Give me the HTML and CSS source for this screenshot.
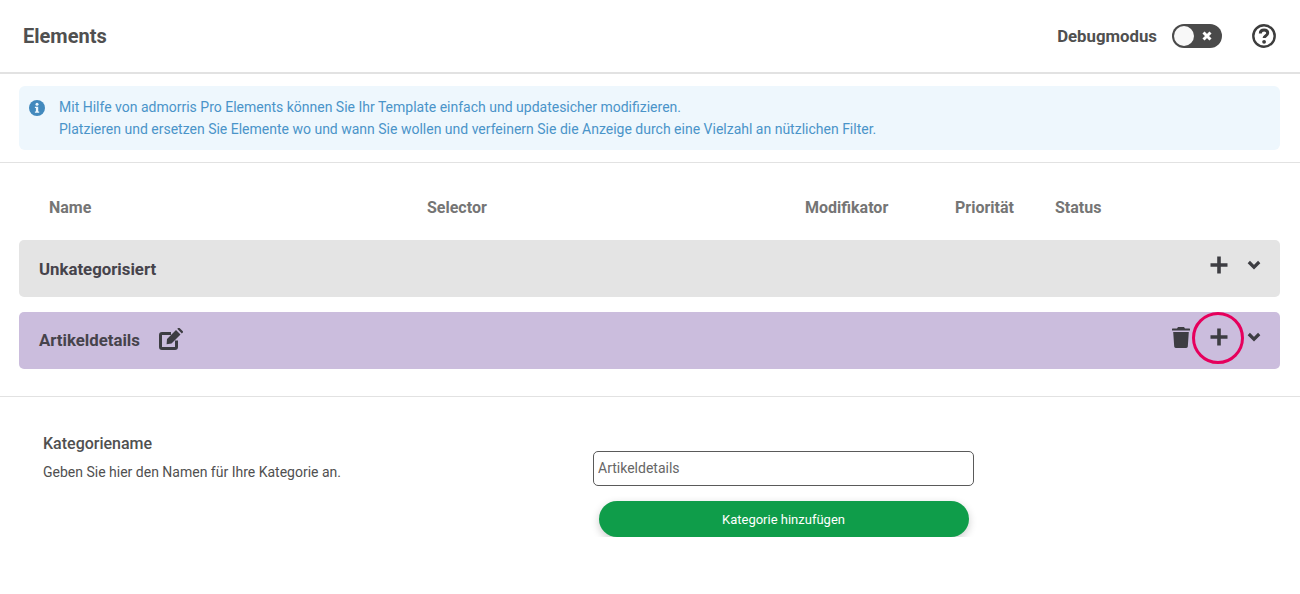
FILE: index.html
```html
<!DOCTYPE html>
<html lang="de">
<head>
    <meta charset="UTF-8">
    <meta name="viewport" content="width=device-width, initial-scale=1.0">
    <title>Elements</title>
    <link rel="stylesheet" href="styles.css">
</head>
<body>

<header class="top-bar">
    <h1 class="page-title">Elements</h1>
    <div class="top-actions">
        <span class="debug-label">Debugmodus</span>
        <div class="switch">
            <span class="switch-knob"></span>
            <svg class="switch-x" viewBox="0 0 10 10"><path d="M1.500 1.500 8.500 8.500M8.500 1.500 1.500 8.500"/></svg>
        </div>
        <svg class="help-icon" viewBox="0 0 24 24">
            <circle cx="12" cy="12" r="10.700"/>
            <path class="help-q" d="M8.300 9.600c0-2.200 1.600-3.500 3.800-3.500s3.600 1.300 3.600 3c0 2.700-3.600 2.500-3.600 5"/>
            <circle class="help-dot" cx="12.100" cy="17.800" r="1.900"/>
        </svg>
    </div>
</header>

<section class="info-wrap">
    <div class="info-box">
        <svg class="info-icon" viewBox="0 0 16 16">
            <circle cx="8" cy="8" r="8"/>
            <circle class="info-mark" cx="8" cy="4.300" r="1.500"/>
            <path class="info-mark" d="M5.900 6.800h3.300v4.700h1v1.300H5.900v-1.300h1V8.100h-1z"/>
        </svg>
        <p class="info-text">Mit Hilfe von admorris Pro Elements können Sie Ihr Template einfach und updatesicher modifizieren.<br>Platzieren und ersetzen Sie Elemente wo und wann Sie wollen und verfeinern Sie die Anzeige durch eine Vielzahl an nützlichen Filter.</p>
    </div>
</section>

<section class="list">
    <div class="list-head">
        <span class="col-name">Name</span>
        <span class="col-selector">Selector</span>
        <span class="col-mod">Modifikator</span>
        <span class="col-prio">Priorität</span>
        <span class="col-status">Status</span>
    </div>

    <div class="category grey">
        <span class="category-name">Unkategorisiert</span>
        <div class="category-actions">
            <svg class="plus-icon" viewBox="0 0 18 18"><path d="M9 .5v17M.5 9h17"/></svg>
            <svg class="chevron-icon" viewBox="0 0 14 10"><path d="M1.800 2 7 7.200 12.200 2"/></svg>
        </div>
    </div>

    <div class="category purple">
        <span class="category-name">Artikeldetails</span>
        <svg class="edit-icon" viewBox="0 0 24 22">
            <path class="edit-box" d="M17.500 12.500V19a1.500 1.500 0 0 1-1.500 1.500H3A1.500 1.500 0 0 1 1.500 19V7A1.500 1.500 0 0 1 3 5.500h9"/>
            <path class="edit-pen" d="M8 11 17 2l4.500 4.500-9 9-4.900.800zM18.200.8l.8-.6a1.300 1.300 0 0 1 1.800 0l2.800 2.800a1.300 1.300 0 0 1 0 1.800l-.8.8z"/>
        </svg>
        <div class="category-actions">
            <svg class="trash-icon" viewBox="0 0 18 21">
                <path d="M6 0h6l1 1.500h4.500a.5.5 0 0 1 .5.5v1.500H0V2a.5.5 0 0 1 .5-.5H5zM1.200 5h15.600l-1 14.500a1.600 1.600 0 0 1-1.600 1.500H3.800a1.600 1.600 0 0 1-1.600-1.500z"/>
            </svg>
            <svg class="plus-icon" viewBox="0 0 18 18"><path d="M9 .5v17M.5 9h17"/></svg>
            <svg class="chevron-icon" viewBox="0 0 14 10"><path d="M1.800 2 7 7.200 12.200 2"/></svg>
            <span class="highlight-ring"></span>
        </div>
    </div>
</section>

<section class="form-area">
    <div class="form-label">
        <h2 class="form-title">Kategoriename</h2>
        <p class="form-hint">Geben Sie hier den Namen für Ihre Kategorie an.</p>
    </div>
    <div class="form-fields">
        <input class="name-input" type="text" value="Artikeldetails">
        <button class="add-button">Kategorie hinzufügen</button>
    </div>
</section>

</body>
</html>
```

FILE: styles.css
```css
* {
    box-sizing: border-box;
}
body {
    margin: 0;
    background-color: #fff;
    color: #505050;
    font-family: Roboto, "Liberation Sans", sans-serif;
    font-size: 14px;
}
svg {
    display: block;
    flex: none;
}

.top-bar {
    display: flex;
    align-items: center;
    justify-content: space-between;
    height: 74px;
    padding: 0 24px 0 23px;
    border-bottom: 2px solid #e2e2e2;
}
.page-title {
    margin: 0;
    font-size: 20px;
    font-weight: 700;
}
.top-actions {
    display: flex;
    align-items: center;
}
.debug-label {
    font-size: 16.800px;
    font-weight: 700;
}
.switch {
    display: flex;
    align-items: center;
    justify-content: space-between;
    width: 50px;
    height: 24px;
    margin-left: 15px;
    padding: 2px 10px 2px 2px;
    background-color: #4a4a4a;
    border-radius: 12px;
}
.switch-knob {
    width: 20px;
    height: 20px;
    background-color: #f8f8f8;
    border-radius: 50%;
}
.switch-x {
    width: 10px;
    height: 10px;
    fill: none;
    stroke: #fff;
    stroke-width: 3;
}
.help-icon {
    width: 24px;
    height: 24px;
    margin-left: 30px;
    fill: none;
    stroke: #3d3d3d;
    stroke-width: 2.400;
}
.help-q {
    stroke-width: 3;
}
.help-dot {
    fill: #3d3d3d;
    stroke: none;
}

.info-wrap {
    padding: 12px 20px 12px 19px;
    border-bottom: 1px solid #e2e2e2;
}
.info-box {
    display: flex;
    height: 64px;
    padding: 10px;
    background-color: #eef7fd;
    border-radius: 6px;
    color: #4a94c9;
}
.info-icon {
    width: 16px;
    height: 16px;
    margin-top: 4px;
    fill: #4289bd;
}
.info-mark {
    fill: #eef7fd;
}
.info-text {
    margin: 0 0 0 14px;
    font-size: 14px;
    line-height: 22px;
}

.list {
    padding: 0 20px 27px 19px;
    border-bottom: 1px solid #e2e2e2;
}
.list-head {
    display: flex;
    align-items: center;
    height: 77px;
    padding: 12px 0 0 30px;
    color: #757575;
    font-size: 16px;
    font-weight: 700;
}
.col-name,
.col-selector {
    width: 378px;
}
.col-mod {
    width: 150px;
}
.col-prio {
    width: 100px;
}
.category {
    display: flex;
    align-items: center;
    height: 57px;
    padding: 0 19px 0 20px;
    border-radius: 5px;
}
.category + .category {
    margin-top: 15px;
}
.grey {
    background-color: #e4e4e4;
}
.purple {
    background-color: #cbbddd;
}
.category-name {
    font-size: 16.800px;
    font-weight: 700;
    color: #46434b;
}
.purple .category-name {
    margin-top: -1px;
}
.category-actions {
    position: relative;
    display: flex;
    align-items: center;
    margin-left: auto;
    margin-top: -7px;
}
.plus-icon {
    width: 18px;
    height: 18px;
    fill: none;
    stroke: #3d3d42;
    stroke-width: 3.600;
}
.chevron-icon {
    width: 14px;
    height: 10px;
    margin-left: 19px;
    fill: none;
    stroke: #3d3d42;
    stroke-width: 3.200;
}
.trash-icon {
    width: 18px;
    height: 21px;
    margin-right: 20px;
    fill: #3d3d42;
}
.edit-icon {
    width: 24px;
    height: 22px;
    margin: -4px 0 0 19px;
}
.edit-box {
    fill: none;
    stroke: #3d3d42;
    stroke-width: 3;
}
.edit-pen {
    fill: #3d3d42;
}
.highlight-ring {
    position: absolute;
    top: 50%;
    right: 17px;
    width: 52px;
    height: 52px;
    margin-top: -25px;
    border: 3px solid #e6005c;
    border-radius: 50%;
}

.form-area {
    display: flex;
    padding: 37px 20px 0 43px;
}
.form-label {
    width: 550px;
}
.form-title {
    margin: 0;
    font-size: 16px;
    font-weight: 500;
    line-height: 20px;
}
.form-hint {
    margin: 8px 0 0;
    font-size: 14px;
    line-height: 20px;
}
.form-fields {
    display: flex;
    flex-direction: column;
    align-items: center;
    width: 381px;
    padding-top: 17px;
}
.name-input {
    width: 381px;
    height: 35px;
    padding: 0 4px 2px;
    border: 1px solid #5a5a5a;
    border-radius: 5px;
    color: #666;
    font-family: inherit;
    font-size: 14px;
}
.add-button {
    width: 370px;
    height: 36px;
    margin-top: 15px;
    background-color: #0f9d4a;
    border: none;
    border-radius: 18px;
    box-shadow: 0 3px 8px rgba(0, 0, 0, 0.2);
    color: #fff;
    font-family: inherit;
    font-size: 13px;
    font-weight: 400;
}
```
